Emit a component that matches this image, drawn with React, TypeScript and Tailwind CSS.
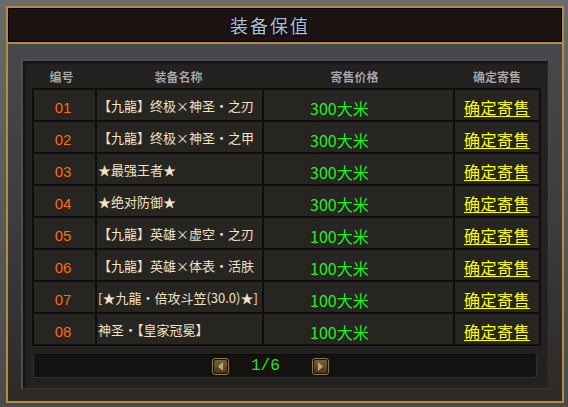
import React from "react";

const rows = [
  { no: "01", name: "【九龍】终极×神圣・之刃", price: "300大米" },
  { no: "02", name: "【九龍】终极×神圣・之甲", price: "300大米" },
  { no: "03", name: "★最强王者★", price: "300大米" },
  { no: "04", name: "★绝对防御★", price: "300大米" },
  { no: "05", name: "【九龍】英雄×虚空・之刃", price: "100大米" },
  { no: "06", name: "【九龍】英雄×体表・活肤", price: "100大米" },
  { no: "07", name: "[★九龍・倍攻斗笠(30.0)★]", price: "100大米" },
  { no: "08", name: "神圣・【皇家冠冕】", price: "100大米" },
];

const cjk = "font-['Noto_Sans_CJK_SC','Noto_Sans',sans-serif]";

function ArrowBtn({ dir }: { dir: "l" | "r" }) {
  return (
    <div className="w-[17px] h-[17px] rounded-[3px] border border-[#8a7a58] bg-[#1a1408] p-[1px]">
      <div className="w-full h-full rounded-[2px] bg-gradient-to-b from-[#7a6038] to-[#4a3818] flex items-center justify-center">
        <svg width="7" height="9" viewBox="0 0 7 9">
          {dir === "l" ? (
            <polygon points="6,0 6,9 1,4.5" fill="#b8a880" />
          ) : (
            <polygon points="1,0 1,9 6,4.5" fill="#b8a880" />
          )}
        </svg>
      </div>
    </div>
  );
}

export default function App() {
  return (
    <div className="w-[568px] h-[407px] bg-gradient-to-b from-[#6a6a6a] to-[#4a4a4a] pl-[6px] pr-[4px] pt-[6px] pb-[4px]">
      <div className="w-full h-full border-2 border-[#b48c40] flex flex-col">
        {/* title */}
        <div className="h-[34px] border border-black bg-[#1c1312] flex items-center justify-center pr-[30px]">
          <span
            className={`${cjk} text-[18px] leading-[18px] tracking-[2px] text-[#a8c0d8]`}
            style={{ textShadow: "0 0 2px #000, 1px 1px 1px #000" }}
          >
            装备保值
          </span>
        </div>
        <div className="h-[2px] bg-[#b48c40]" />
        {/* content */}
        <div className="flex-1 bg-gradient-to-b from-[#46484c] via-[#3b3c3f] to-[#2d2926] pt-[15px]">
          <div className="ml-[13px] w-[527px] h-[330px] bg-[#242220] border-t-2 border-l-2 border-[#4e4e50] border-r border-b border-r-[#2a2a2a] border-b-[#3a3632] shadow-[inset_2px_2px_3px_rgba(0,0,0,0.5)]">
            {/* header */}
            <div
              className={`${cjk} ml-[9px] w-[509px] h-[27px] flex items-end pb-[5px] text-[12px] leading-[12px] font-bold text-[#a8a8a8]`}
              style={{ textShadow: "0 0 1px #000" }}
            >
              <div className="w-[63px] text-center pr-[4px]">编号</div>
              <div className="w-[167px] text-center">装备名称</div>
              <div className="w-[191px] text-center pr-[6px]">寄售价格</div>
              <div className="w-[88px] text-center">确定寄售</div>
            </div>
            {/* table */}
            <div className="ml-[9px] w-[509px] bg-[#0f0e0d] p-[2px] grid grid-cols-[61px_165px_189px_84px] gap-[2px]">
              {rows.map((r) => (
                <React.Fragment key={r.no}>
                  <div className="h-[30px] bg-[#272522] flex items-center justify-center pr-[3px] pt-[6px] font-['Liberation_Sans',sans-serif] text-[15px] text-[#ff6a00]">
                    {r.no}
                  </div>
                  <div
                    className={`${cjk} h-[30px] bg-[#272522] flex items-center pl-[1px] pt-[2px] whitespace-nowrap text-[13px] text-[#f2e2c2] overflow-visible relative z-10`}
                  >
                    {r.name}
                  </div>
                  <div className={`${cjk} h-[30px] bg-[#272522] flex items-center pl-[46px] pt-[5px] text-[16px] text-[#22ee22]`}>
                    {r.price}
                  </div>
                  <div className="h-[30px] bg-[#272522] flex items-center justify-center pt-[3px]">
                    <span className={`${cjk} text-[16px] leading-[18px] tracking-[0.5px] text-[#ffff00] underline underline-offset-[2px]`}>
                      确定寄售
                    </span>
                  </div>
                </React.Fragment>
              ))}
            </div>
            {/* pagination */}
            <div className="ml-[10px] mt-[8px] w-[504px] h-[24px] rounded-[4px] bg-[#131211] border border-[#34302c] border-t-[#0a0a0a] flex items-center pl-[178px]">
              <ArrowBtn dir="l" />
              <div className="ml-[22px] w-[33px] font-['Liberation_Mono',monospace] text-[16px] leading-[16px] text-[#22e622]">
                1/6
              </div>
              <div className="ml-[28px]">
                <ArrowBtn dir="r" />
              </div>
            </div>
          </div>
        </div>
      </div>
    </div>
  );
}
